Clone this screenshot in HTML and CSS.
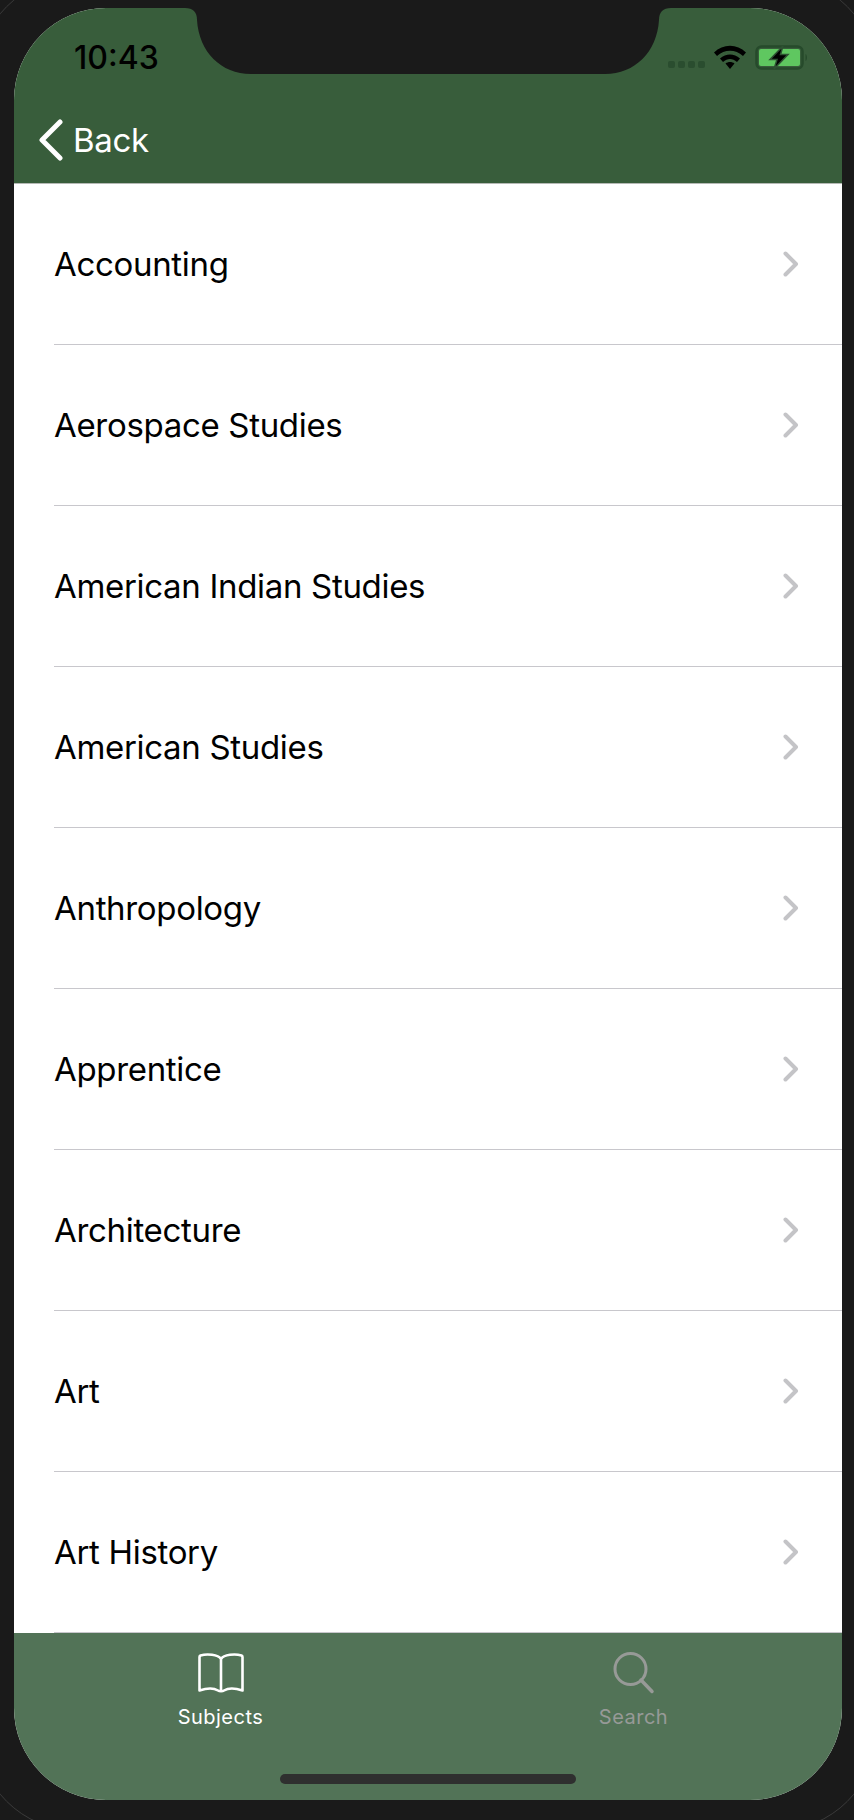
FILE: index.html
```html
<!DOCTYPE html>
<html>
<head>
    <title>Subjects</title>
    <link rel="stylesheet" href="styles.css">
</head>
<body>
<div class="bezel"></div>
<div class="screen">
    <svg class="notch" width="486" height="66" viewBox="0 0 486 66">
        <path d="M0 0C8 0 12 4 12 12C14 44 36 66 66 66H420C450 66 472 44 474 12C474 4 478 0 486 0Z" fill="#1a1a1a"/>
    </svg>

    <header class="top-bar">
        <div class="status-bar">
            <span class="time">10:43</span>
            <div class="status-icons">
                <div class="signal"><i></i><i></i><i></i><i></i></div>
                <svg class="wifi" width="32" height="24" viewBox="0 0 32 24">
                    <path d="M0 7.500C9 -1.500 23 -1.500 32 7.500L29 11C21.500 4 10.500 4 3 11Z"/>
                    <path d="M6 13.500C12 8 20 8 26 13.500L23 17C18.500 13 13.500 13 9 17Z"/>
                    <path d="M11.500 18.500C14 16.500 18 16.500 20.500 18.500L16 24Z"/>
                </svg>
                <svg class="battery" width="54" height="26" viewBox="0 0 54 26">
                    <rect x="1.500" y="1.500" width="46" height="22" rx="5" fill="none" stroke="#264a2b" stroke-width="2.500"/>
                    <rect x="4" y="4" width="41" height="17" rx="2" fill="#5fc760"/>
                    <path d="M50.500 9C52.500 10 52.500 15 50.500 16Z" fill="#264a2b"/>
                    <path d="M28 1L15 14.500H22L19 24L33 9.500H25.500Z" fill="#000" stroke="#2e5232" stroke-width="1.500"/>
                </svg>
            </div>
        </div>
        <div class="nav-bar">
            <svg class="back-icon" width="24" height="42" viewBox="0 0 24 42">
                <path d="M21 3L3 21L21 39" fill="none" stroke="#fff" stroke-width="5" stroke-linecap="round" stroke-linejoin="round"/>
            </svg>
            <span class="back-label">Back</span>
        </div>
    </header>

    <ul class="subject-list">
        <li class="subject-row"><div class="subject-inner"><span>Accounting</span><svg class="chevron" width="16" height="26" viewBox="0 0 16 26"><path d="M2.500 2.500L13 13L2.500 23.500"/></svg></div></li>
        <li class="subject-row"><div class="subject-inner"><span>Aerospace Studies</span><svg class="chevron" width="16" height="26" viewBox="0 0 16 26"><path d="M2.500 2.500L13 13L2.500 23.500"/></svg></div></li>
        <li class="subject-row"><div class="subject-inner"><span>American Indian Studies</span><svg class="chevron" width="16" height="26" viewBox="0 0 16 26"><path d="M2.500 2.500L13 13L2.500 23.500"/></svg></div></li>
        <li class="subject-row"><div class="subject-inner"><span>American Studies</span><svg class="chevron" width="16" height="26" viewBox="0 0 16 26"><path d="M2.500 2.500L13 13L2.500 23.500"/></svg></div></li>
        <li class="subject-row"><div class="subject-inner"><span>Anthropology</span><svg class="chevron" width="16" height="26" viewBox="0 0 16 26"><path d="M2.500 2.500L13 13L2.500 23.500"/></svg></div></li>
        <li class="subject-row"><div class="subject-inner"><span>Apprentice</span><svg class="chevron" width="16" height="26" viewBox="0 0 16 26"><path d="M2.500 2.500L13 13L2.500 23.500"/></svg></div></li>
        <li class="subject-row"><div class="subject-inner"><span>Architecture</span><svg class="chevron" width="16" height="26" viewBox="0 0 16 26"><path d="M2.500 2.500L13 13L2.500 23.500"/></svg></div></li>
        <li class="subject-row"><div class="subject-inner"><span>Art</span><svg class="chevron" width="16" height="26" viewBox="0 0 16 26"><path d="M2.500 2.500L13 13L2.500 23.500"/></svg></div></li>
        <li class="subject-row"><div class="subject-inner"><span>Art History</span><svg class="chevron" width="16" height="26" viewBox="0 0 16 26"><path d="M2.500 2.500L13 13L2.500 23.500"/></svg></div></li>
    </ul>

    <nav class="tab-bar">
        <div class="tab tab-active">
            <svg class="tab-icon" width="46" height="42" viewBox="0 0 46 42">
                <path d="M23 7C20 2.500 9 1.500 2.500 3.500C1.800 3.800 1.500 4.300 1.500 5V38.500C9 36 16 36 20 38.500C21.500 39.500 24.500 39.500 26 38.500C30 36 37 36 44.500 38.500V5C44.500 4.300 44.200 3.800 43.500 3.500C37 1.500 26 2.500 23 7ZM23 7V38" fill="none" stroke="currentColor" stroke-width="2.600" stroke-linejoin="round" stroke-linecap="round"/>
            </svg>
            <span>Subjects</span>
        </div>
        <div class="tab">
            <svg class="tab-icon" width="46" height="42" viewBox="0 0 46 42">
                <circle cx="19.500" cy="17" r="15.500" fill="none" stroke="currentColor" stroke-width="3"/>
                <path d="M30 28L41 39.500" fill="none" stroke="currentColor" stroke-width="3.500" stroke-linecap="round"/>
            </svg>
            <span>Search</span>
        </div>
        <div class="home-indicator"></div>
    </nav>
</div>
</body>
</html>
```

FILE: styles.css
```css
html, body {
    height: 100%;
}

body {
    margin: 0;
    background-color: #1a1a1a;
    font-family: Inter, "Liberation Sans", sans-serif;
    overflow: hidden;
    position: relative;
}

.bezel {
    position: absolute;
    left: -23px;
    top: -23px;
    right: -23px;
    bottom: -11px;
    border: 1.5px solid #3a3a3a;
    border-radius: 100px;
}

.screen {
    position: relative;
    margin: 8px 12px 0 14px;
    height: 1792px;
    border-radius: 92px;
    overflow: hidden;
    display: flex;
    flex-direction: column;
    background-color: #fff;
}

.notch {
    position: absolute;
    left: 171px;
    top: 0;
}

.top-bar {
    height: 175px;
    background-color: #385d3b;
    border-bottom: 1px solid #b5b9b5;
    flex-shrink: 0;
}

.status-bar {
    height: 88px;
    display: flex;
    justify-content: space-between;
    align-items: flex-start;
}

.time {
    margin: 32px 0 0 60px;
    font-size: 32px;
    line-height: 36px;
    font-weight: 500;
    color: #000;
}

.status-icons {
    display: flex;
    align-items: flex-start;
    margin: 37px 33px 0 0;
}

.signal {
    display: flex;
    gap: 3px;
    margin: 16px 9px 0 0;
}

.signal i {
    width: 7px;
    height: 7px;
    border-radius: 2px;
    background-color: #2a4d2f;
}

.wifi {
    fill: #000;
    margin-right: 9px;
}

.nav-bar {
    height: 87px;
    display: flex;
    align-items: center;
    padding-left: 25px;
}

.back-label {
    margin-left: 10px;
    font-size: 33px;
    letter-spacing: -0.32px;
    color: #fff;
}

.subject-list {
    list-style: none;
    margin: 0;
    padding: 0;
    flex-shrink: 0;
}

.subject-row {
    padding-left: 40px;
}

.subject-inner {
    height: 160px;
    border-bottom: 1px solid #c8c7cc;
    display: flex;
    align-items: center;
    justify-content: space-between;
    padding-right: 43px;
    font-size: 33px;
    letter-spacing: -0.32px;
    color: #000;
}

.chevron {
    fill: none;
    stroke: #c4c4c7;
    stroke-width: 4;
    stroke-linecap: round;
    stroke-linejoin: round;
}

.tab-bar {
    position: relative;
    flex: 1;
    display: flex;
    padding-right: 2px;
    background-color: #527357;
}

.tab {
    flex: 1;
    display: flex;
    flex-direction: column;
    align-items: center;
    padding-top: 19px;
    color: #979a97;
    font-size: 20px;
    letter-spacing: 0.5px;
}

.tab-active {
    color: #fff;
}

.tab-icon {
    margin-bottom: 11px;
}

.home-indicator {
    position: absolute;
    left: 266px;
    bottom: 16px;
    width: 296px;
    height: 10px;
    border-radius: 5px;
    background-color: #2f2f2f;
}
```
